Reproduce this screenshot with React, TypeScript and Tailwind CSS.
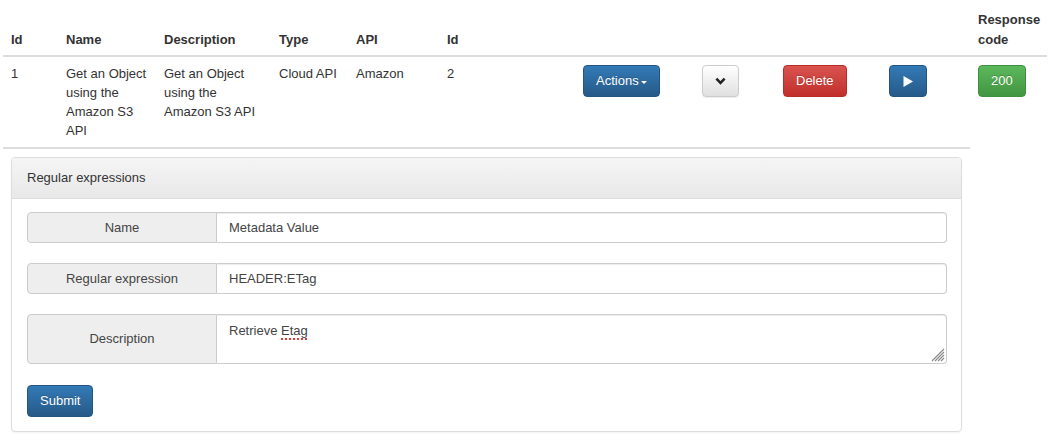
import React from 'react';

const font = { fontFamily: '"Liberation Sans", Arial, Helvetica, sans-serif' };

const btnBase =
  'inline-flex items-center justify-center h-[32px] px-3 rounded-[4px] border text-[13px] leading-5';
const btnPrimary = `${btnBase} bg-linear-to-b from-[#337ab7] to-[#265a88] border-[#245580] text-white [text-shadow:0_-1px_0_rgba(0,0,0,0.2)]`;
const btnDanger = `${btnBase} bg-linear-to-b from-[#d9534f] to-[#c12e2a] border-[#b92c28] text-white [text-shadow:0_-1px_0_rgba(0,0,0,0.2)]`;
const btnSuccess = `${btnBase} bg-linear-to-b from-[#5cb85c] to-[#419641] border-[#3e8f3e] text-white [text-shadow:0_-1px_0_rgba(0,0,0,0.2)]`;
const btnDefault = `${btnBase} bg-linear-to-b from-white to-[#e0e0e0] border-[#ccc] text-[#333] shadow-[0_1px_1px_rgba(0,0,0,0.075)]`;

const columns = [55, 98, 115, 77, 91, 136, 119, 81, 106, 89, 77];

const InputGroup: React.FC<{ label: string; value: string }> = ({ label, value }) => (
  <div className="flex h-[31px] mb-5">
    <div className="w-[190px] shrink-0 flex items-center justify-center bg-[#eee] border border-[#ccc] rounded-l-[4px] text-[13px] text-[#444]">
      {label}
    </div>
    <input
      readOnly
      defaultValue={value}
      className="flex-1 min-w-0 border border-l-0 border-[#ccc] rounded-r-[4px] px-3 text-[13px] text-[#444] bg-white shadow-[inset_0_1px_1px_rgba(0,0,0,0.075)] outline-none"
      style={font}
    />
  </div>
);

export default function App() {
  return (
    <div className="bg-white w-[1050px] h-[442px] text-[#333] text-[13px]" style={font}>
      <div className="pl-[3px]">
        <table className="table-fixed w-[1044px] border-separate border-spacing-0">
          <colgroup>
            {columns.map((w, i) => (
              <col key={i} style={{ width: w }} />
            ))}
          </colgroup>
          <thead>
            <tr>
              {['Id', 'Name', 'Description', 'Type', 'API', 'Id', '', '', '', ''].map((h, i) => (
                <th
                  key={i}
                  className="text-left align-bottom font-bold px-2 pt-[10px] pb-[5px] leading-5 border-b-2 border-[#ddd]"
                >
                  {h}
                </th>
              ))}
              <th className="text-left align-bottom font-bold px-2 pt-[10px] pb-[5px] leading-5 border-b-2 border-[#ddd]">
                Response code
              </th>
            </tr>
          </thead>
          <tbody>
            <tr className="align-top leading-[19px]">
              <td className="px-2 pt-[7px] pb-[7px]">1</td>
              <td className="px-2 pt-[7px] pb-[7px]">Get an Object using the Amazon S3 API</td>
              <td className="px-2 pt-[7px] pb-[7px]">Get an Object using the Amazon S3 API</td>
              <td className="px-2 pt-[7px] pb-[7px]">Cloud API</td>
              <td className="px-2 pt-[7px] pb-[7px]">Amazon</td>
              <td className="px-2 pt-[7px] pb-[7px]">2</td>
              <td className="px-2 pt-[8px]">
                <button className={btnPrimary}>
                  Actions
                  <span className="ml-[2px] mt-[2px] w-0 h-0 border-t-[3px] border-t-white border-x-[3px] border-x-transparent" />
                </button>
              </td>
              <td className="px-2 pt-[8px]">
                <button className={`${btnDefault} w-[37px]`}>
                  <svg width="12" height="8" viewBox="0 0 12 8">
                    <path d="M1.5 1.5 L6 6 L10.5 1.5" fill="none" stroke="#222" strokeWidth="2.8" />
                  </svg>
                </button>
              </td>
              <td className="px-2 pt-[8px]">
                <button className={btnDanger}>Delete</button>
              </td>
              <td className="px-2 pt-[8px]">
                <button className={`${btnPrimary} w-[38px]`}>
                  <svg width="10" height="11" viewBox="0 0 10 11">
                    <path d="M0.5 0 L10 5.5 L0.5 11 Z" fill="white" />
                  </svg>
                </button>
              </td>
              <td className="px-2 pt-[8px]">
                <button className={btnSuccess}>200</button>
              </td>
            </tr>
            <tr>
              <td colSpan={10} className="px-2 pt-2 pb-2 border-t-2 border-[#ddd]">
                <div className="border border-[#ddd] rounded-[4px] shadow-[0_1px_2px_rgba(0,0,0,0.05)] overflow-hidden">
                  <div className="px-[15px] py-[10px] leading-5 text-[13px] bg-linear-to-b from-[#f5f5f5] to-[#e8e8e8] border-b border-[#ddd]">
                    Regular expressions
                  </div>
                  <div className="pl-[15px] pr-[14px] pt-[13px] pb-[14px]">
                    <InputGroup label="Name" value="Metadata Value" />
                    <InputGroup label="Regular expression" value="HEADER:ETag" />
                    <div className="flex h-[50px]">
                      <div className="w-[190px] shrink-0 flex items-center justify-center bg-[#eee] border border-[#ccc] rounded-l-[4px] text-[13px] text-[#444]">
                        Description
                      </div>
                      <div className="relative flex-1 border border-l-0 border-[#ccc] rounded-r-[4px] px-3 pt-[6px] leading-5 text-[13px] text-[#444] bg-white shadow-[inset_0_1px_1px_rgba(0,0,0,0.075)]">
                        Retrieve{' '}
                        <span className="underline decoration-dotted decoration-[#e33] decoration-2 underline-offset-[3px]">
                          Etag
                        </span>
                        <svg className="absolute right-[1px] bottom-[1px]" width="16" height="16" viewBox="0 0 16 16">
                          <path
                            d="M15 3 L3 15 M15 6 L6 15 M15 9 L9 15 M15 12 L12 15"
                            stroke="#888"
                            strokeWidth="1.1"
                          />
                        </svg>
                      </div>
                    </div>
                    <div className="mt-[21px]">
                      <button className={btnPrimary}>Submit</button>
                    </div>
                  </div>
                </div>
              </td>
              <td />
            </tr>
          </tbody>
        </table>
      </div>
    </div>
  );
}
